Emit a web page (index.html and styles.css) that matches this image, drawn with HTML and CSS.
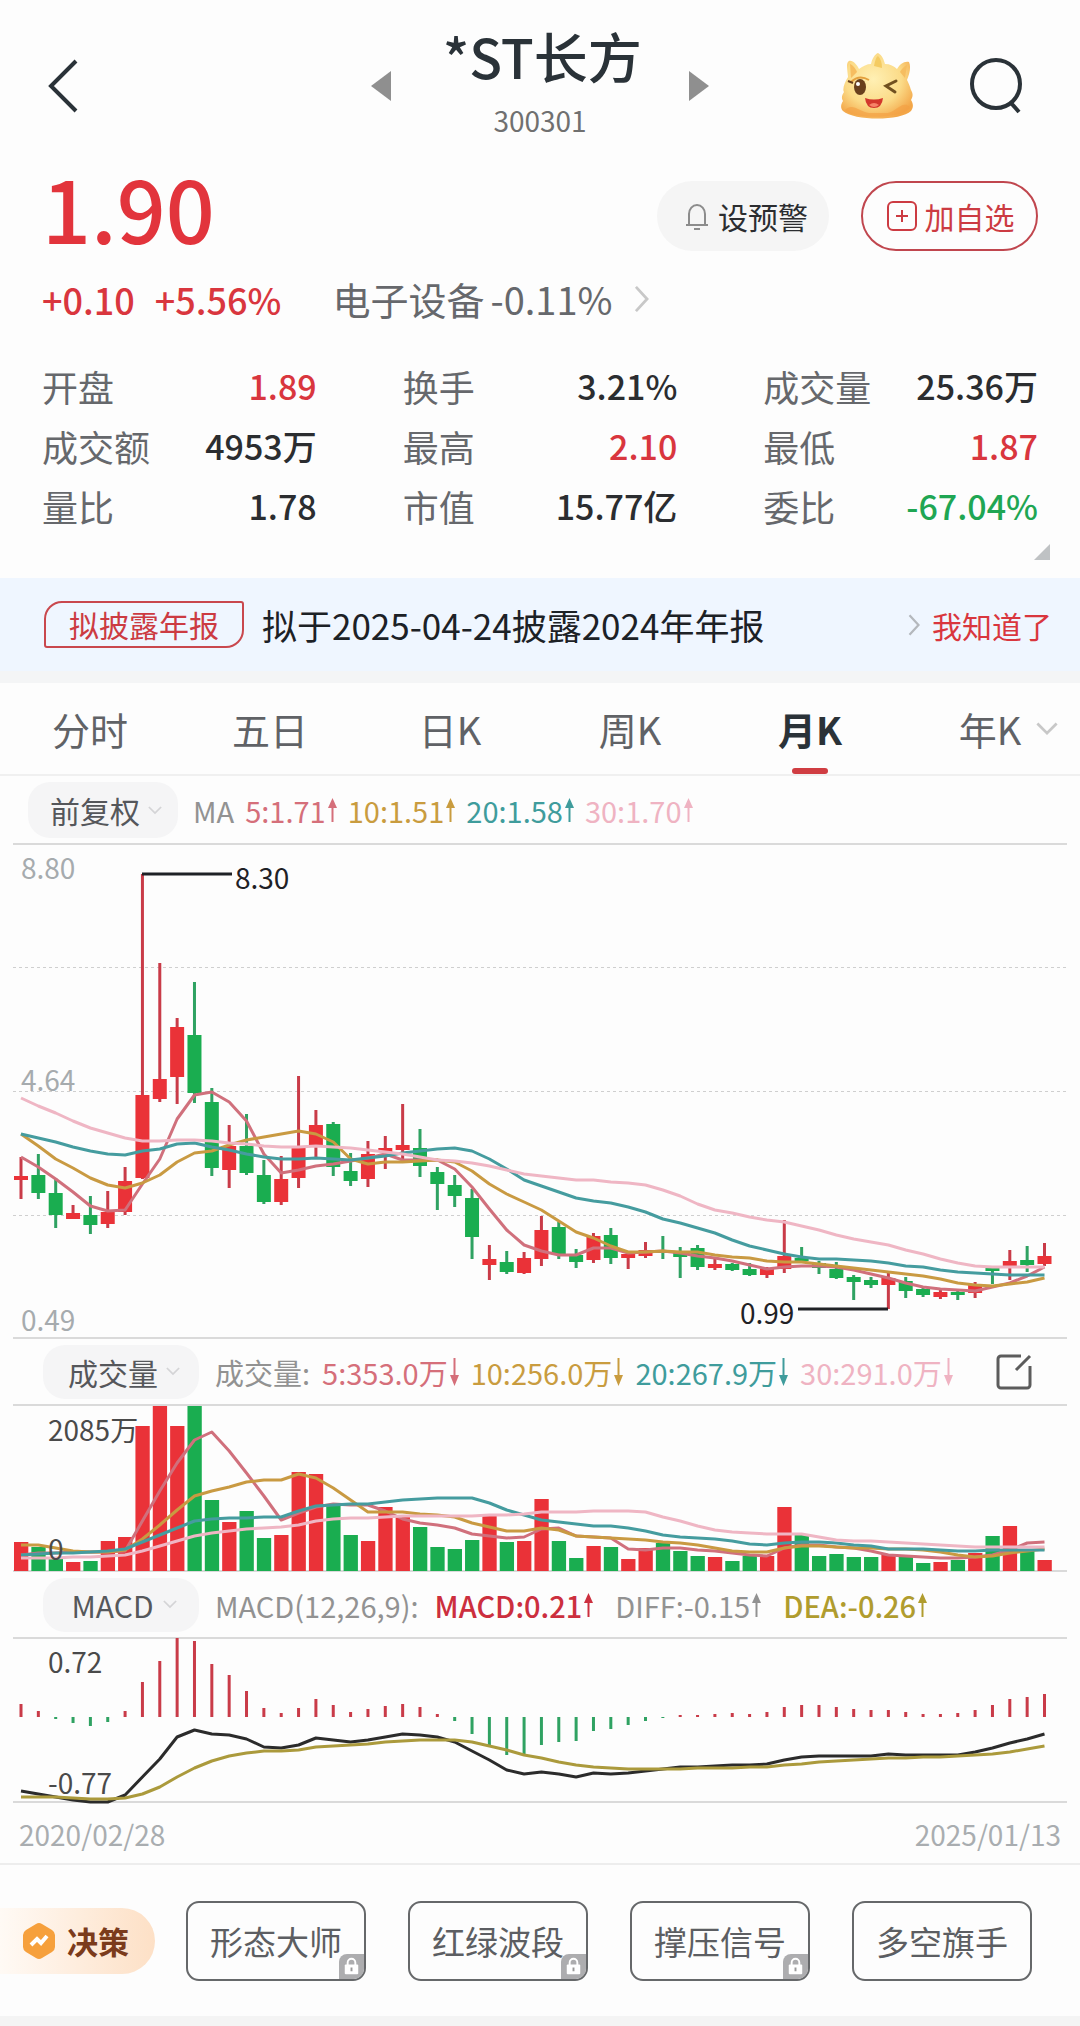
FILE: index.html
```html
<!DOCTYPE html>
<html lang="zh-CN">
<head>
<meta charset="utf-8">
<meta name="viewport" content="width=device-width, initial-scale=1">
<title>*ST长方 300301</title>
<link rel="stylesheet" href="styles.css">
</head>
<body>
<svg class="sprite" aria-hidden="true">
  <symbol id="up" viewBox="0 0 9 24"><path d="M4.500 6V24" stroke="currentColor" stroke-width="2"/><path d="M4.500 0L9 10H0Z" fill="currentColor"/></symbol>
  <symbol id="down" viewBox="0 0 9 28"><path d="M4.500 0V20" stroke="currentColor" stroke-width="2"/><path d="M4.500 28L9 17H0Z" fill="currentColor"/></symbol>
  <symbol id="chev-down" viewBox="0 0 16 10"><path d="M1 1L8 8L15 1" fill="none" stroke="currentColor" stroke-width="2"/></symbol>
  <symbol id="chev-right" viewBox="0 0 16 28"><path d="M2 1L14 14L2 27" fill="none" stroke="currentColor" stroke-width="3"/></symbol>
  <symbol id="lock" viewBox="0 0 26 26"><path d="M9 12V9a4 4 0 0 1 8 0v3" fill="none" stroke="#fff" stroke-width="2"/><rect x="6" y="11" width="14" height="10" rx="1" fill="#fff"/><path d="M13 14v4" stroke="#999" stroke-width="2"/></symbol>
</svg>

<header class="header">
  <button class="icon-btn back" aria-label="返回"><svg width="32" height="56" viewBox="0 0 32 56"><path d="M29 3L4 28L29 53" fill="none" stroke="#2a3238" stroke-width="4"/></svg></button>
  <div class="switcher">
    <button class="icon-btn" aria-label="上一只"><svg width="20" height="30" viewBox="0 0 20 30"><path d="M20 0V30L0 15Z" fill="#8f8f8f"/></svg></button>
    <div class="name">
      <h1>*ST长方</h1>
      <p>300301</p>
    </div>
    <button class="icon-btn" aria-label="下一只"><svg width="20" height="30" viewBox="0 0 20 30"><path d="M0 0V30L20 15Z" fill="#8f8f8f"/></svg></button>
  </div>
  <div class="tools">
    <button class="icon-btn" aria-label="助手">
      <svg width="74" height="68" viewBox="0 0 74 68">
        <defs><radialGradient id="face" cx="45%" cy="40%" r="65%"><stop offset="0" stop-color="#fff0b4"/><stop offset=".6" stop-color="#fbdb88"/><stop offset="1" stop-color="#f3a648"/></radialGradient></defs>
        <path d="M8 25C7 15 6 11 9 9C13 8 17 13 19 17C23 14 27 12 31 12C32 7 35 2 38 1C42 3 44 8 45 12C50 12 54 14 57 17C60 12 64 9 69 10C71 14 70 21 67 28C70 34 70 35 71 38C74 43 72 46 71 48C74 53 73 56 71 59C61 69 14 69 3 59C0 56 1 52 3 49C1 46 2 43 4 40C2 37 5 30 8 25Z" fill="url(#face)"/>
        <path d="M34 14C35 9 36 5 38 4C41 7 42 11 42 16Z" fill="#f4cb62"/>
        <path d="M10 12C13 13 16 17 17 20L11 26ZM67 13C64 14 61 18 60 20L65 26Z" fill="#f6bd60"/>
        <path d="M5 58C12 50 20 60 29 61H48C56 60 62 48 70 55C66 67 12 68 5 58Z" fill="#f2a043" opacity=".65"/>
        <path d="M11 30Q19 22 29 28" fill="none" stroke="#e4a03d" stroke-width="2"/>
        <ellipse cx="20" cy="35" rx="6" ry="8" fill="#69401d"/><circle cx="18" cy="32" r="2" fill="#fff"/><path d="M13 31L8 29" stroke="#69401d" stroke-width="2"/>
        <path d="M56 29L46 34L55 40" fill="none" stroke="#705020" stroke-width="3" stroke-linecap="round"/>
        <path d="M25 46Q34 49 43 46Q42 56 34 56Q26 56 25 46Z" fill="#d3382c"/><path d="M29 53Q34 49 39 53Q34 57 29 53Z" fill="#f78468"/>
      </svg>
    </button>
    <button class="icon-btn" aria-label="搜索"><svg width="56" height="60" viewBox="0 0 56 60"><circle cx="28" cy="28" r="24" fill="none" stroke="#2a3238" stroke-width="4"/><path d="M43 47L51 56" stroke="#2a3238" stroke-width="4"/></svg></button>
  </div>
</header>

<main>
<section class="quote">
  <div class="price-row">
    <strong class="price">1.90</strong>
    <button class="alert-btn"><svg width="26" height="28" viewBox="0 0 26 28"><path d="M2 23H24M5 22V12a8 9 0 0 1 16 0V22M10 27H16" fill="none" stroke="#8c8c8c" stroke-width="2"/></svg>设预警</button>
    <button class="add-btn"><svg width="30" height="30" viewBox="0 0 30 30"><rect x="1" y="1" width="28" height="28" rx="5" fill="none" stroke="currentColor" stroke-width="2"/><path d="M15 9V21M9 15H21" stroke="currentColor" stroke-width="2"/></svg>加自选</button>
  </div>
  <div class="change-row">
    <span class="red">+0.10</span>
    <span class="red">+5.56%</span>
    <a class="sector" href="#sector"><span>电子设备</span><span>-0.11%</span><svg class="pale" width="15" height="26"><use href="#chev-right"/></svg></a>
  </div>
  <dl class="stats">
    <div><dt>开盘</dt><dd class="red">1.89</dd></div>
    <div><dt>换手</dt><dd>3.21%</dd></div>
    <div><dt>成交量</dt><dd>25.36万</dd></div>
    <div><dt>成交额</dt><dd>4953万</dd></div>
    <div><dt>最高</dt><dd class="red">2.10</dd></div>
    <div><dt>最低</dt><dd class="red">1.87</dd></div>
    <div><dt>量比</dt><dd>1.78</dd></div>
    <div><dt>市值</dt><dd>15.77亿</dd></div>
    <div><dt>委比</dt><dd class="green">-67.04%</dd></div>
  </dl>
  <button class="expand" aria-label="展开"><svg width="16" height="16" viewBox="0 0 16 16"><path d="M16 0V16H0Z" fill="#bfc2c4"/></svg></button>
</section>

<section class="notice">
  <span class="tag">拟披露年报</span>
  <p>拟于2025-04-24披露2024年年报</p>
  <svg class="notice-chev" width="12" height="22"><use href="#chev-right"/></svg>
  <button class="ack">我知道了</button>
</section>

<nav class="tabs">
  <button>分时</button>
  <button>五日</button>
  <button>日K</button>
  <button>周K</button>
  <button class="active">月K</button>
  <button>年K<svg class="tab-chev" width="22" height="14"><use href="#chev-down"/></svg></button>
</nav>

<section class="legend legend-ma">
  <div class="picker"><select aria-label="复权方式"><option>前复权</option></select><svg width="14" height="9"><use href="#chev-down"/></svg></div>
  <span class="c-label">MA</span>
  <span class="c5">5:1.71<svg class="up"><use href="#up"/></svg></span>
  <span class="c10">10:1.51<svg class="up"><use href="#up"/></svg></span>
  <span class="c20">20:1.58<svg class="up"><use href="#up"/></svg></span>
  <span class="c30">30:1.70<svg class="up"><use href="#up"/></svg></span>
</section>
<div class="chart"><svg id="kline" viewBox="0 0 1054 494" role="img" aria-label="月K线"></svg></div>

<section class="legend legend-sub">
  <div class="picker"><select aria-label="副图指标一"><option>成交量</option></select><svg width="14" height="9"><use href="#chev-down"/></svg></div>
  <span class="c-label">成交量:</span>
  <span class="c5">5:353.0万<svg class="down"><use href="#down"/></svg></span>
  <span class="c10">10:256.0万<svg class="down"><use href="#down"/></svg></span>
  <span class="c20">20:267.9万<svg class="down"><use href="#down"/></svg></span>
  <span class="c30">30:291.0万<svg class="down"><use href="#down"/></svg></span>
  <button class="icon-btn edit" aria-label="编辑指标"><svg width="36" height="36" viewBox="0 0 36 36"><path d="M25 2H5a3 3 0 0 0-3 3V31a3 3 0 0 0 3 3H31a3 3 0 0 0 3-3V12M20 16L34 2" fill="none" stroke="#5c5c5c" stroke-width="3"/></svg></button>
</section>
<div class="chart"><svg id="volume" viewBox="0 0 1054 166" role="img" aria-label="成交量"></svg></div>

<section class="legend legend-sub">
  <div class="picker"><select aria-label="副图指标二"><option>MACD</option></select><svg width="14" height="9"><use href="#chev-down"/></svg></div>
  <span class="c-label">MACD(12,26,9):</span>
  <div class="macd-values">
    <span class="c-macd">MACD:0.21<svg class="up"><use href="#up"/></svg></span>
    <span class="c-label">DIFF:-0.15<svg class="up"><use href="#up"/></svg></span>
    <span class="c-dea">DEA:-0.26<svg class="up"><use href="#up"/></svg></span>
  </div>
</section>
<div class="chart"><svg id="macd" viewBox="0 0 1054 164" role="img" aria-label="MACD"></svg></div>
<div class="dates"><time>2020/02/28</time><time>2025/01/13</time></div>

<section class="strategies">
  <button class="decision"><svg width="32" height="36" viewBox="0 0 32 36"><path d="M13 1Q16 -1 19 1L29 7Q32 9 32 12V24Q32 27 29 29L19 35Q16 37 13 35L3 29Q0 27 0 24V12Q0 9 3 7Z" fill="#f6a03c"/><path d="M8 22L14 16L18 20L24 13" fill="none" stroke="#fff" stroke-width="4"/></svg>决策</button>
  <div class="cards">
    <button>形态大师<svg class="lock"><use href="#lock"/></svg></button>
    <button>红绿波段<svg class="lock"><use href="#lock"/></svg></button>
    <button>撑压信号<svg class="lock"><use href="#lock"/></svg></button>
    <button>多空旗手</button>
  </div>
</section>
</main>
<footer class="base"></footer>
<script src="charts.js"></script>
</body>
</html>
```

FILE: styles.css
```css
* { box-sizing: border-box; margin: 0; padding: 0; }

body {
  background: #fdfdfd;
  color: #2b2d30;
  font-family: "Noto Sans CJK SC", "Noto Sans", sans-serif;
}

button, select {
  font: inherit;
  color: inherit;
  background: none;
  border: 0;
  appearance: none;
}

svg { display: block; flex: none; }
a { color: inherit; text-decoration: none; }

.sprite { position: absolute; width: 0; height: 0; }
.icon-btn { display: flex; align-items: center; }
.red { color: #d9363e; }
.green { color: #1fa653; }
.pale { color: #c8c8c8; }

.header {
  display: grid;
  grid-template-columns: 1fr auto 1fr;
  align-items: center;
  height: 172px;
  padding: 0 47px;
}
.switcher { display: flex; align-items: center; gap: 52px; }
.name { width: 194px; text-align: center; white-space: nowrap; }
.name h1 { font-size: 54px; font-weight: 500; line-height: 68px; color: #2a3238; }
.name p { font-size: 28px; line-height: 60px; color: #707070; }
.tools { display: flex; justify-content: flex-end; align-items: center; gap: 54px; padding-right: 9px; }

.quote { padding: 0 42px; }
.price-row { display: flex; align-items: center; height: 88px; }
.price {
  flex: 1;
  align-self: flex-start;
  font-size: 86px;
  font-weight: 500;
  line-height: 70px;
  color: #e2343c;
}
.alert-btn, .add-btn {
  display: flex;
  align-items: center;
  justify-content: center;
  gap: 8px;
  height: 70px;
  border-radius: 36px;
  font-size: 30px;
}
.alert-btn { width: 172px; margin-right: 32px; padding-left: 6px; background: #f5f5f5; }
.add-btn { width: 177px; padding-left: 2px; border: 2px solid #c0464e; color: #cc3b42; }

.change-row {
  display: flex;
  align-items: center;
  gap: 20px;
  height: 78px;
  font-size: 36px;
  line-height: 52px;
}
.change-row .red { font-weight: 500; }
.sector { display: flex; align-items: center; gap: 6px; margin-left: 31px; font-size: 38px; color: #66686c; }
.sector svg { margin-left: 16px; }

.stats {
  display: grid;
  grid-template-columns: repeat(3, 1fr);
  column-gap: 86px;
  padding-top: 18px;
}
.stats div { display: flex; justify-content: space-between; align-items: center; height: 60px; }
.stats dt { font-size: 36px; line-height: 52px; color: #66686c; }
.stats dd { font-size: 34px; line-height: 52px; font-weight: 500; }
.expand { display: block; margin: 8px -12px 18px auto; }

.notice {
  display: flex;
  align-items: center;
  height: 105px;
  padding: 0 28px 0 44px;
  background: #eff6ff;
  border-bottom: 12px solid #f4f5f6;
}
.tag {
  width: 200px;
  margin-right: 18px;
  border: 2px solid #c9484e;
  border-radius: 18px 3px;
  font-size: 30px;
  line-height: 43px;
  text-align: center;
  color: #cc3b42;
}
.notice p { flex: 1; font-size: 35px; line-height: 48px; color: #1c2126; }
.notice-chev { margin-right: 12px; color: #b4b8bd; }
.ack { font-size: 30px; line-height: 44px; color: #d9363e; }

.tabs {
  display: grid;
  grid-template-columns: repeat(6, 1fr);
  height: 93px;
  border-bottom: 2px solid #f0f0f0;
}
.tabs button {
  display: flex;
  align-items: center;
  justify-content: center;
  position: relative;
  font-size: 38px;
  color: #606266;
}
.tabs .active { font-weight: 700; color: #2a3238; }
.tabs .active::after {
  content: "";
  position: absolute;
  bottom: 0;
  left: calc(50% - 18px);
  width: 36px;
  height: 6px;
  border-radius: 3px;
  background: #d03d42;
}
.tab-chev { position: absolute; left: calc(50% + 46px); color: #c8c8c8; }

.legend {
  display: flex;
  align-items: center;
  gap: 11px;
  height: 68px;
  padding: 0 40px 0 28px;
  font-size: 29px;
  line-height: 44px;
  white-space: nowrap;
}
.legend span { display: flex; align-items: center; }
.legend .up { width: 9px; height: 24px; margin-left: 2px; }
.legend .down { width: 9px; height: 28px; margin-left: 2px; }
.picker {
  display: flex;
  align-items: center;
  justify-content: center;
  gap: 8px;
  width: 150px;
  height: 56px;
  margin-right: 4px;
  padding-left: 6px;
  border-radius: 22px;
  background: #f5f5f6;
  color: #d4d4d6;
}
.picker select { font-size: 30px; line-height: 44px; color: #55575b; }
.legend-sub { gap: 12px; padding-left: 43px; height: 67px; }
.legend-sub .picker { width: 156px; height: 54px; }
.macd-values { display: flex; gap: 22px; margin-left: 4px; }
.edit { margin-left: auto; margin-right: 8px; }
.c-label { color: #929292; }
.c5 { color: #d56f7a; }
.c10 { color: #c99c3f; }
.c20 { color: #3f9c9c; }
.c30 { color: #efb3c2; }
.c-macd { color: #cc2f3e; font-weight: 500; }
.c-dea { color: #b09c2e; font-weight: 500; }

.chart { padding: 0 13px; }
.chart svg { width: 100%; height: auto; overflow: visible; }
.chart text { font-size: 28px; }

.dates {
  display: flex;
  justify-content: space-between;
  height: 63px;
  padding: 0 19px;
  border-bottom: 2px solid #ededed;
  font-size: 28px;
  line-height: 64px;
  color: #a9adb0;
}

.strategies { display: flex; align-items: center; height: 151px; gap: 31px; padding-right: 48px; }
.decision {
  display: flex;
  align-items: center;
  gap: 12px;
  width: 155px;
  height: 66px;
  padding-left: 23px;
  border-radius: 0 33px 33px 0;
  background: linear-gradient(90deg, #fffaf5, #fde0c6);
  font-size: 31px;
  font-weight: 700;
  color: #7b3b1c;
  white-space: nowrap;
}
.cards { flex: 1; display: grid; grid-template-columns: repeat(4, 1fr); gap: 42px; }
.cards button {
  position: relative;
  height: 80px;
  border: 2px solid #66686a;
  border-radius: 13px;
  font-size: 33px;
  color: #5c5e62;
  white-space: nowrap;
}
.lock {
  position: absolute;
  right: 0;
  bottom: 0;
  width: 25px;
  height: 25px;
  border-radius: 8px 0 10px 0;
  background: #adadaf;
}
.base { height: 10px; background: #f4f4f4; }
```

FILE: charts.js
```js
const NS = "http://www.w3.org/2000/svg";
const RED = "#ea3238", GREEN = "#1aad50";
const WICK_RED = "#c93b48", WICK_GREEN = "#2fa262";
const COLORS = { ma5: "#d0707c", ma10: "#c99a42", ma20: "#459c9f", ma30: "#efb6c4" };
const COUNT = 60;
const centre = i => 8 + (1023.5 * i) / (COUNT - 1);

function add(svg, tag, attrs, text) {
  const el = document.createElementNS(NS, tag);
  for (const key in attrs) el.setAttribute(key, attrs[key]);
  if (text) el.textContent = text;
  svg.appendChild(el);
}
function hline(svg, y, dashed) {
  add(svg, "line", { x1: 0, x2: 1054, y1: y, y2: y, stroke: dashed ? "#cfcfcf" : "#dadada",
    "stroke-width": dashed ? 1 : 2, "stroke-dasharray": dashed ? "3 3" : "none" });
}
function curve(svg, ys, color) {
  const points = ys.map((y, i) => centre(i).toFixed(1) + "," + y).join(" ");
  add(svg, "polyline", { points, fill: "none", stroke: color, "stroke-width": 3, "stroke-linejoin": "round" });
}
function label(svg, x, y, text, fill) {
  add(svg, "text", { x, y, fill }, text);
}

// Rise or fall of each month, used by both the candles and the volume bars.
const trend = "RGGRGRRRRRGGRGGRRRGGRRRGGGGRGRRGGRGRRGGGRGGRRGGGGGRGGRGRGRGR";

// high, body top, body bottom, low
const candles = [
  [313,332,336,355],[310,331,349,355],[334,349,371,384],[361,369,375,375],[352,371,381,390],
  [347,368,380,384],[323,337,368,371],[30,251,334,335],[119,235,255,258],[174,183,233,260],
  [138,191,249,259],[244,258,324,332],[281,302,326,344],[270,302,329,331],[316,331,358,360],
  [312,335,358,361],[232,304,334,344],[266,281,303,315],[278,280,323,332],[309,327,337,342],
  [297,310,335,343],[292,304,308,325],[260,301,306,317],[285,304,322,333],[323,328,340,366],
  [331,341,352,363],[345,354,393,415],[401,415,421,436],[407,418,428,430],[408,414,429,430],
  [372,386,415,422],[378,383,410,415],[405,411,418,424],[389,392,416,419],[384,391,414,420],
  [408,410,414,425],[398,406,412,414],[392,407,409,415],[403,409,413,434],[401,404,423,426],
  [414,420,424,426],[419,420,426,427],[419,425,431,432],[423,425,431,434],[376,412,425,429],
  [403,414,417,417],[417,419,424,430],[418,425,434,435],[431,433,438,456],[433,436,441,444],
  [427,434,441,465],[433,437,447,454],[443,445,451,453],[445,448,453,455],[447,448,451,456],
  [438,440,449,454],[422,424,427,440],[406,417,422,436],[402,416,421,428],[399,412,420,422]
];

const k = document.getElementById("kline");
hline(k, 0); hline(k, 123.5, true); hline(k, 247.5, true); hline(k, 371.5, true); hline(k, 494);
label(k, 8, 35, "8.80", "#a6abae");
label(k, 8, 247, "4.64", "#a6abae");
label(k, 8, 487, "0.49", "#a6abae");
candles.forEach(([high, top, bottom, low], i) => {
  const up = trend[i] === "R", x = centre(i);
  add(k, "rect", { x: x - 1.5, y: high, width: 3, height: low - high, fill: up ? WICK_RED : WICK_GREEN });
  add(k, "rect", { x: x - 7, y: top, width: 14, height: bottom - top, fill: up ? RED : GREEN });
});
curve(k, [313,323,335,348,362,367,366,340,315,275,251,248,258,277,310,329,326,322,320,317,314,310,316,316,316,325,343,365,386,401,407,411,411,404,404,409,408,407,409,412,414,417,421,425,423,422,422,423,426,430,434,439,443,445,446,447,443,439,432,423], COLORS.ma5);
curve(k, [290,302,315,324,334,341,344,339,331,318,309,307,301,296,293,290,287,290,298,315,320,318,318,317,316,318,327,340,350,358,366,377,388,394,402,408,408,407,408,408,411,413,414,417,418,418,420,422,424,426,428,430,432,435,439,441,442,440,438,434], COLORS.ma10);
curve(k, [290,294,298,303,307,310,311,307,305,300,299,303,306,310,313,315,315,314,315,316,314,312,309,307,305,304,307,315,325,336,342,348,354,357,359,363,368,375,379,384,389,396,402,406,410,413,415,415,416,417,419,422,423,426,428,429,430,431,431,431], COLORS.ma20);
curve(k, [254,262,269,277,284,289,294,297,297,296,296,297,299,300,302,303,303,302,303,304,306,308,310,313,316,317,319,322,326,330,332,334,336,336,338,339,341,346,352,360,366,369,373,376,378,382,386,391,395,398,401,406,410,415,419,422,423,423,423,423], COLORS.ma30);
add(k, "line", { x1: 129, x2: 219, y1: 30, y2: 30, stroke: "#1f2126", "stroke-width": 3 });
label(k, 222, 45, "8.30", "#1f2126");
add(k, "line", { x1: 785, x2: 875, y1: 465, y2: 465, stroke: "#1f2126", "stroke-width": 3 });
label(k, 727, 480, "0.99", "#1f2126");

const v = document.getElementById("volume");
hline(v, 0); hline(v, 166);
[137,142,154,157,156,136,132,21,1,21,1,95,117,106,133,130,67,69,101,130,136,102,111,122,142,144,135,111,137,136,94,136,153,141,142,154,143,138,146,151,152,156,151,151,102,130,151,149,152,152,150,152,158,157,155,148,131,121,145,155]
  .forEach((top, i) => add(v, "rect", { x: centre(i) - 7, y: top, width: 14.3, height: 166 - top, fill: trend[i] === "R" ? RED : GREEN }));
curve(v, [150,148,148,147,147,147,146,116,86,58,35,27,46,68,91,115,108,102,99,100,100,106,114,118,120,123,129,131,133,132,124,123,131,132,133,144,145,143,143,145,146,148,150,151,143,140,140,142,143,146,150,151,152,153,153,152,150,145,138,137], COLORS.ma5);
curve(v, [140,140,143,146,147,147,145,134,120,105,91,86,82,77,75,75,69,73,83,95,107,107,107,109,110,112,118,122,126,126,123,125,131,132,133,134,135,137,138,140,143,146,147,147,143,141,141,142,143,143,144,144,145,147,150,152,151,148,146,144], COLORS.ma10);
curve(v, [150,149,148,148,147,146,144,137,130,123,116,114,113,113,112,112,106,101,100,99,99,97,95,94,93,93,93,98,105,110,115,117,119,121,121,123,126,130,132,133,134,136,139,140,138,137,137,138,140,141,144,144,144,145,146,146,145,145,145,145], COLORS.ma20);
curve(v, [153,153,153,152,152,151,150,146,141,136,131,128,126,124,123,122,120,116,114,113,113,112,111,111,111,111,111,110,110,109,107,107,107,106,106,106,107,112,116,121,125,127,128,129,129,129,132,135,136,136,137,138,139,140,141,142,142,142,142,142], COLORS.ma30);
label(v, 35, 36, "2085万", "#4a4a4a");
label(v, 35, 155, "0", "#4a4a4a");

const m = document.getElementById("macd");
const zero = 79;
hline(m, 0); hline(m, 164);
[66,73,81,85,88,84,73,44,23,0,3,26,37,53,70,75,70,61,67,74,71,68,66,69,76,83,96,107,117,116,107,104,103,93,91,87,83,80,77,77,76,75,76,74,69,67,67,69,71,72,72,74,76,76,75,72,67,61,59,56]
  .forEach((tip, i) => add(m, "rect", { x: centre(i) - 1.5, y: Math.min(tip, zero), width: 3, height: Math.abs(tip - zero), fill: tip < zero ? WICK_RED : WICK_GREEN }));
label(m, 35, 35, "0.72", "#4a4a4a");
label(m, 35, 156, "-0.77", "#4a4a4a");
curve(m, [153,156,159,162,164,164,157,139,121,99,92,96,97,101,109,110,107,100,102,104,102,99,96,97,99,104,113,122,132,136,134,136,139,135,136,135,133,131,129,129,128,127,127,126,122,119,118,118,118,118,116,117,117,117,117,114,110,105,101,96], "#2b2b2b");
curve(m, [159,159,159,160,161,161,160,156,149,139,130,123,118,115,113,113,112,109,108,107,106,104,103,102,102,102,104,108,112,117,120,124,127,129,130,131,131,131,131,130,130,130,129,129,127,126,124,123,122,121,120,120,119,119,118,117,116,114,111,108], "#ab9a3c");
```
